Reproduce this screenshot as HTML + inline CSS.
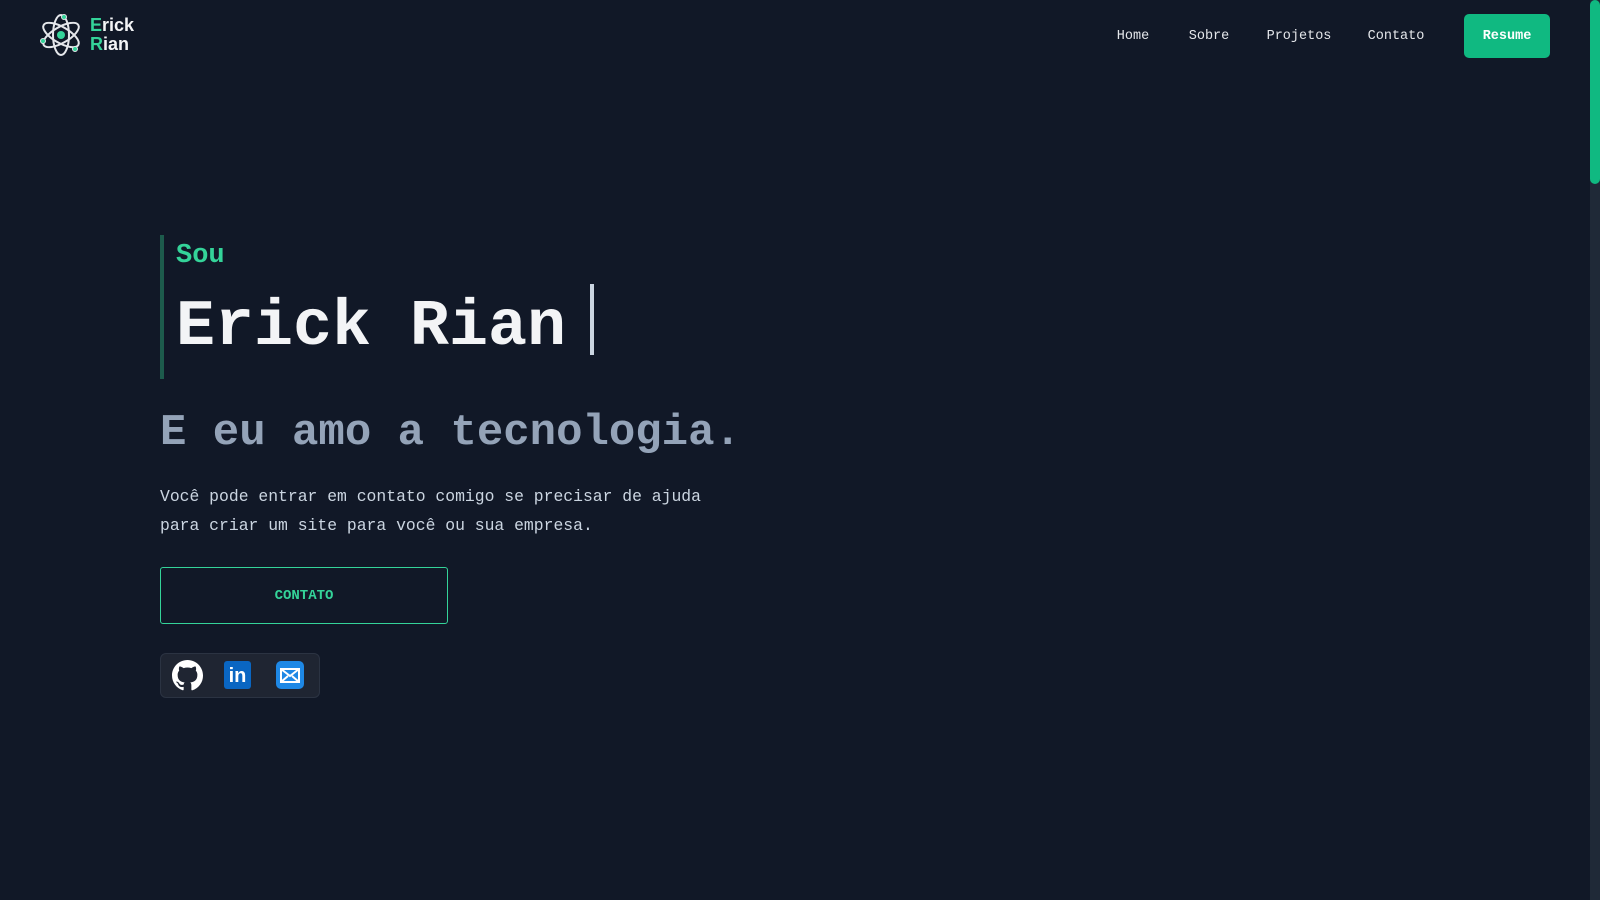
<!DOCTYPE html>
<html><head><meta charset="utf-8"><style>
*{margin:0;padding:0;box-sizing:border-box}
body{width:1600px;height:900px;background:#111827;overflow:hidden;position:relative;font-family:"Liberation Mono",monospace;color:#e5e7eb}
.abs{position:absolute}
.nav a{position:absolute;top:29px;font-size:13.5px;color:#e5e7eb;transform:translateX(-50%);white-space:nowrap}
</style></head><body>
<svg class="abs" style="left:40px;top:12px" width="44" height="46" viewBox="0 0 44 46" fill="none" stroke="#e5e7eb" stroke-width="2">
<ellipse cx="21" cy="23" rx="20" ry="8" transform="rotate(30 21 23)"/>
<ellipse cx="21" cy="23" rx="20" ry="8" transform="rotate(-30 21 23)"/>
<ellipse cx="21" cy="23" rx="20" ry="8" transform="rotate(90 21 23)"/>
<circle cx="21" cy="23" r="4" fill="#34d399" stroke="none"/>
<circle cx="24" cy="5" r="2.5" fill="#34d399" stroke="#e5e7eb" stroke-width="1"/>
<circle cx="3" cy="29" r="2.5" fill="#34d399" stroke="#e5e7eb" stroke-width="1"/>
<circle cx="35" cy="37" r="2.5" fill="#34d399" stroke="#e5e7eb" stroke-width="1"/>
</svg>
<div class="abs" style="left:90px;top:16px;font-family:'Liberation Sans',sans-serif;font-weight:bold;font-size:18px;line-height:19px;color:#f3f4f6">
<div><span style="color:#34d399">E</span>rick</div><div><span style="color:#34d399">R</span>ian</div></div>
<div class="nav"><a style="left:1133px">Home</a><a style="left:1209px">Sobre</a><a style="left:1299px">Projetos</a><a style="left:1396px">Contato</a></div>
<div class="abs" style="left:1464px;top:14px;width:86px;height:44px;background:#10b981;border-radius:5px;color:#fff;font-size:13.5px;font-weight:bold;display:flex;align-items:center;justify-content:center">Resume</div>
<div class="abs" style="left:1590px;top:0;width:10px;height:900px;background:#1f2937"></div>
<div class="abs" style="left:1590px;top:0;width:10px;height:184px;background:#10b981;border-radius:5px"></div>
<div class="abs" style="left:160px;top:235px;width:4px;height:144px;background:#1d5b4c"></div>
<div class="abs" style="left:176px;top:241px;font-size:27px;font-weight:bold;color:#34d399">Sou</div>
<div class="abs" style="left:176px;top:287px;font-size:65px;font-weight:bold;color:#f3f4f6;line-height:80px">Erick Rian</div>
<div class="abs" style="left:590px;top:284px;width:4px;height:71px;background:#cbd5e1"></div>
<div class="abs" style="left:160px;top:405px;font-size:44px;font-weight:bold;color:#94a3b8;line-height:56px;white-space:nowrap">E eu amo a tecnologia.</div>
<div class="abs" style="left:160px;top:483px;font-size:16.4px;line-height:28.5px;color:#cbd5e1;width:600px">Você pode entrar em contato comigo se precisar de ajuda<br>para criar um site para você ou sua empresa.</div>
<div class="abs" style="left:160px;top:567px;width:288px;height:57px;border:1px solid #34d399;border-radius:3px;color:#34d399;font-weight:bold;font-size:14px;display:flex;align-items:center;justify-content:center">CONTATO</div>
<div class="abs" style="left:160px;top:653px;width:160px;height:45px;background:#1f2532;border:1px solid #2b3342;border-radius:6px"></div>
<svg class="abs" style="left:172px;top:660px" width="31" height="31" viewBox="0 0 16 16"><path fill="#fff" d="M8 0C3.580 0 0 3.58 0 8c0 3.54 2.29 6.53 5.470 7.590.4.07.55-.17.55-.38v-1.33c-2.23.48-2.7-1.07-2.7-1.07-.36-.92-.89-1.17-.89-1.17-.73-.5.05-.49.05-.49.8.06 1.23.83 1.23.83.71 1.22 1.87.87 2.33.66.07-.52.28-.87.5-1.07-1.78-.2-3.64-.89-3.64-3.95 0-.87.31-1.59.82-2.15-.08-.2-.36-1.02.08-2.12 0 0 .67-.21 2.2.82a7.6 7.6 0 0 1 4 0c1.53-1.04 2.2-.82 2.2-.82.44 1.1.16 1.92.08 2.120.51.56.82 1.27.82 2.15 0 3.07-1.87 3.75-3.65 3.95.29.25.54.73.54 1.48v2.2c0 .21.15.46.55.38A8 8 0 0 0 16 8c0-4.420-3.58-8-8-8z"/></svg>
<div class="abs" style="left:224px;top:661px;width:27px;height:28px;background:#0a66c2;border-radius:3px;color:#fff;font-family:'Liberation Sans',sans-serif;font-weight:bold;font-size:20px;line-height:30px;text-align:center">in</div>
<svg class="abs" style="left:276px;top:661px" width="28" height="28" viewBox="0 0 28 28"><rect width="28" height="28" rx="5" fill="#1e88e5"/><rect x="5" y="8" width="18" height="13" fill="none" stroke="#fff" stroke-width="2"/><path d="M5 8l9 7 9-7M5 21l7-6M23 21l-7-6" fill="none" stroke="#fff" stroke-width="2"/></svg>
</body></html>
